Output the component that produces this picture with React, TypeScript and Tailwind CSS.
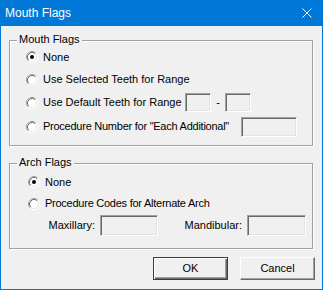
import React from 'react'

const font = { fontFamily: '"Liberation Sans", Arial, sans-serif' }

function Radio({ checked }: { checked?: boolean }) {
  return (
    <svg width="12" height="12" viewBox="0 0 12 12" className="shrink-0">
      <circle cx="6" cy="6" r="5.5" fill="#ffffff" />
      <path d="M2.11 9.89 A5.5 5.5 0 0 1 9.89 2.11" fill="none" stroke="#a0a0a0" strokeWidth="1" />
      <path d="M9.89 2.11 A5.5 5.5 0 0 1 2.11 9.89" fill="none" stroke="#ffffff" strokeWidth="1" />
      <path d="M2.82 9.18 A4.5 4.5 0 0 1 9.18 2.82" fill="none" stroke="#696969" strokeWidth="1" />
      <path d="M9.18 2.82 A4.5 4.5 0 0 1 2.82 9.18" fill="none" stroke="#e3e3e3" strokeWidth="1" />
      {checked && <circle cx="6" cy="6" r="2" fill="#000000" />}
    </svg>
  )
}

function Field({ className }: { className: string }) {
  return (
    <div
      className={`shrink-0 bg-[#f0f0f0] border-t border-l border-t-[#a0a0a0] border-l-[#a0a0a0] border-b border-r border-b-white border-r-white shadow-[inset_1px_1px_0_#696969,inset_-1px_-1px_0_#e3e3e3] ${className}`}
    />
  )
}

function Group({ title, children, className }: { title: string; children: React.ReactNode; className: string }) {
  return (
    <div className={`relative ml-[8px] w-[304px] border border-[#a0a0a0] shadow-[inset_1px_1px_0_white,1px_1px_0_white] ${className}`}>
      <span className="absolute left-[7px] top-[-8px] bg-[#f0f0f0] px-[2px] leading-[13px]">{title}</span>
      {children}
    </div>
  )
}

export default function App() {
  return (
    <div style={font} className="w-[323px] h-[290px] bg-[#f0f0f0] border-x border-b border-[#0078d7] flex flex-col text-[11px] text-black select-none">
      <header className="h-[26px] shrink-0 bg-[#0078d7] flex items-center justify-between pl-[4px] pr-[10px] text-white text-[12px]">
        <span className="mt-[-1px]">Mouth Flags</span>
        <svg width="10" height="10" viewBox="0 0 10 10">
          <path d="M0.5 0.5 L9.5 9.5 M9.5 0.5 L0.5 9.5" stroke="#ffffff" strokeWidth="1" />
        </svg>
      </header>

      <Group title="Mouth Flags" className="mt-[14px] pt-[5px] pb-[6px] pl-[16px]">
        <div className="h-[22px] flex items-center gap-[5px]">
          <Radio checked />
          <span>None</span>
        </div>
        <div className="h-[23px] flex items-center gap-[5px]">
          <Radio />
          <span>Use Selected Teeth for Range</span>
        </div>
        <div className="h-[23px] flex items-center">
          <Radio />
          <span className="w-[147px] pl-[5px] whitespace-nowrap">Use Default Teeth for Range</span>
          <Field className="w-[26px] h-[19px]" />
          <span className="w-[14px] text-center">-</span>
          <Field className="w-[26px] h-[19px]" />
        </div>
        <div className="h-[25px] flex items-center">
          <Radio />
          <span className="w-[203px] pl-[5px] whitespace-nowrap tracking-[-0.25px]">Procedure Number for "Each Additional"</span>
          <Field className="w-[56px] h-[20px]" />
        </div>
      </Group>

      <Group title="Arch Flags" className="mt-[17px] pt-[7px] pb-[12px] pl-[18px]">
        <div className="h-[22px] flex items-center gap-[5px]">
          <Radio checked />
          <span>None</span>
        </div>
        <div className="h-[21px] flex items-center gap-[5px]">
          <Radio />
          <span className="tracking-[-0.25px]">Procedure Codes for Alternate Arch</span>
        </div>
        <div className="h-[22px] flex items-center pl-[17px]">
          <span className="w-[55px] text-right pr-[5px] whitespace-nowrap">Maxillary:</span>
          <Field className="w-[58px] h-[21px]" />
          <span className="w-[89px] text-right pr-[5px] whitespace-nowrap">Mandibular:</span>
          <Field className="w-[59px] h-[21px]" />
        </div>
      </Group>

      <div className="mt-[8px] flex justify-end gap-[12px] pr-[7px]">
        <button className="w-[75px] h-[23px] bg-[#f0f0f0] border border-[#3c3c3c] shadow-[inset_1px_1px_0_white,inset_-1px_-1px_0_#696969,inset_-2px_-2px_0_#a0a0a0]">
          OK
        </button>
        <button className="w-[75px] h-[23px] bg-[#f0f0f0] border-t border-l border-t-white border-l-white border-b border-r border-b-[#696969] border-r-[#696969] shadow-[inset_-1px_-1px_0_#a0a0a0]">
          Cancel
        </button>
      </div>
    </div>
  )
}
